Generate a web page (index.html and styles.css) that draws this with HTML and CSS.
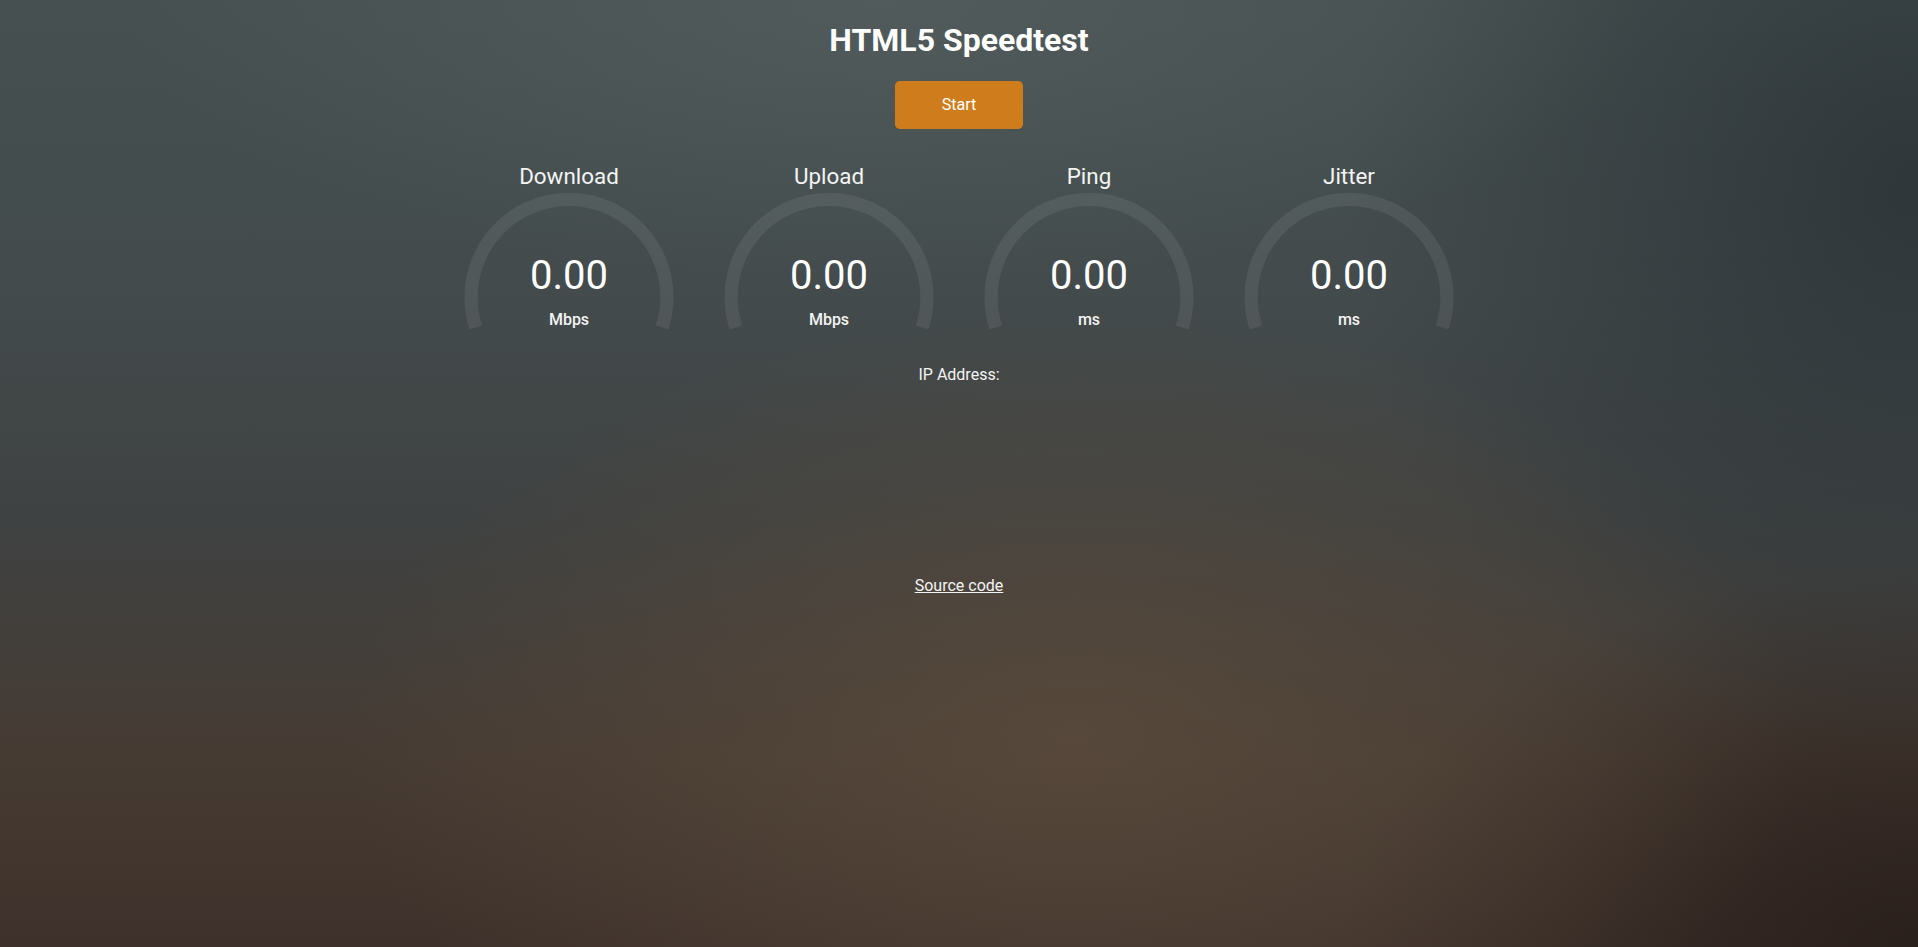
FILE: index.html
```html
<!DOCTYPE html>
<html lang="en">
<head>
<meta charset="utf-8">
<title>HTML5 Speedtest</title>
<link rel="stylesheet" href="styles.css">
</head>
<body>
<h1 class="title">HTML5 Speedtest</h1>
<div class="start-btn">Start</div>
<div class="test">
  <div class="meters">
    <div class="test-area">
      <svg class="gauge" viewBox="0 0 256 200" width="256" height="200"><path d="M34.89 166.45 A97.9 97.9 0 1 1 221.11 166.45" /></svg>
      <div class="readout">
        <div class="test-name">Download</div>
        <div class="meter-text">0.00</div>
        <div class="unit">Mbps</div>
      </div>
    </div>
    <div class="test-area">
      <svg class="gauge" viewBox="0 0 256 200" width="256" height="200"><path d="M34.89 166.45 A97.9 97.9 0 1 1 221.11 166.45" /></svg>
      <div class="readout">
        <div class="test-name">Upload</div>
        <div class="meter-text">0.00</div>
        <div class="unit">Mbps</div>
      </div>
    </div>
    <div class="test-area">
      <svg class="gauge" viewBox="0 0 256 200" width="256" height="200"><path d="M34.89 166.45 A97.9 97.9 0 1 1 221.11 166.45" /></svg>
      <div class="readout">
        <div class="test-name">Ping</div>
        <div class="meter-text">0.00</div>
        <div class="unit">ms</div>
      </div>
    </div>
    <div class="test-area">
      <svg class="gauge" viewBox="0 0 256 200" width="256" height="200"><path d="M34.89 166.45 A97.9 97.9 0 1 1 221.11 166.45" /></svg>
      <div class="readout">
        <div class="test-name">Jitter</div>
        <div class="meter-text">0.00</div>
        <div class="unit">ms</div>
      </div>
    </div>
  </div>
  <div class="ip-area">IP Address: <span class="ip"></span></div>
</div>
<a class="source-link" href="#">Source code</a>
</body>
</html>
```
FILE: styles.css
```css
html, body {
  margin: 0;
  padding: 0;
  border: none;
}
html {
  background: #3f4445;
}
body {
  min-height: 947px;
  text-align: center;
  font-family: Roboto, "Liberation Sans", sans-serif;
  font-size: 16px;
  color: #f4f4f4;
  background:
    radial-gradient(ellipse 38% 45% at 56% 78%, rgba(92, 76, 60, 0.75) 0%, rgba(92, 76, 60, 0) 100%),
    radial-gradient(ellipse 40% 30% at 46% 0%, rgba(82, 92, 92, 0.9) 0%, rgba(82, 92, 92, 0) 100%),
    radial-gradient(ellipse 30% 60% at 100% 20%, rgba(44, 52, 56, 0.9) 0%, rgba(44, 52, 56, 0) 100%),
    radial-gradient(ellipse 30% 40% at 100% 100%, rgba(40, 30, 26, 0.9) 0%, rgba(40, 30, 26, 0) 100%),
    linear-gradient(to bottom, #465050 0%, #434b4c 30%, #3f4242 55%, #463b33 80%, #3e312b 100%);
}
.title {
  font-size: 32px;
  font-weight: 700;
  margin: 21.44px 0;
  color: #ffffff;
}
.start-btn {
  display: inline-block;
  box-sizing: border-box;
  width: 128px;
  height: 48px;
  line-height: 48px;
  border-radius: 4.8px;
  background: #cf7d1c;
  color: #ffffff;
  font-size: 16px;
  cursor: pointer;
}
.test {
  margin-top: 32px;
  margin-bottom: 192px;
}
.meters {
  display: flex;
  justify-content: center;
  gap: 4px;
  padding-bottom: 4px;
}
.test-area {
  display: grid;
  width: 256px;
  height: 200px;
}
.gauge {
  grid-area: 1 / 1;
  display: block;
}
.gauge path {
  fill: none;
  stroke: rgba(255, 255, 255, 0.075);
  stroke-width: 13.2;
}
.readout {
  grid-area: 1 / 1;
  display: flex;
  flex-direction: column;
}
.test-name {
  padding-top: 2.24px;
  font-size: 22.4px;
  line-height: normal;
}
.meter-text {
  margin-top: auto;
  font-size: 40px;
  line-height: normal;
  color: #ffffff;
}
.unit {
  margin-top: 11.25px;
  margin-bottom: 32px;
  font-size: 16px;
  font-weight: 500;
  line-height: normal;
}
.ip-area {
  font-size: 16px;
  line-height: normal;
}
.source-link {
  color: #f4f4f4;
  font-size: 16px;
  text-decoration: underline;
}
```
